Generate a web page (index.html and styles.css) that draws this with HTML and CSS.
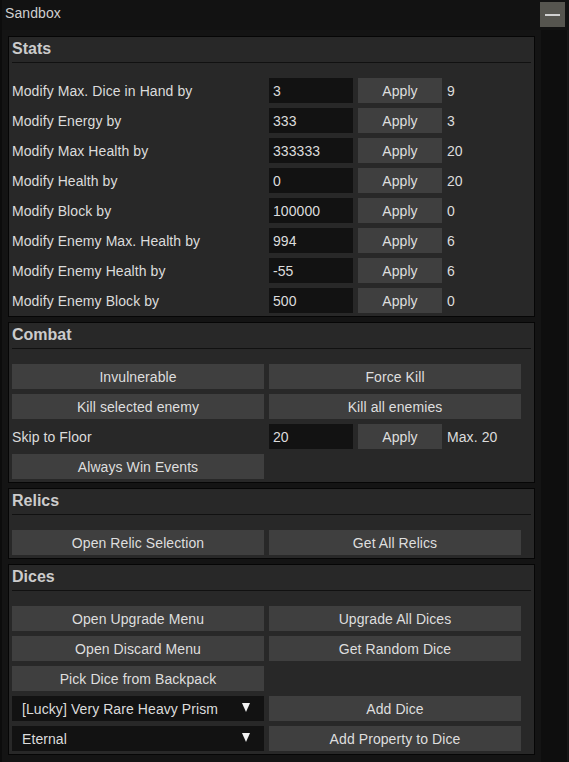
FILE: index.html
```html
<!DOCTYPE html>
<html lang="en">
<head>
    <title>Sandbox</title>
    <link rel="stylesheet" href="styles.css">
</head>
<body>
    <div class="window">
        <div class="titlebar">
            <span class="title">Sandbox</span>
            <button class="collapse"><span class="minus"></span></button>
        </div>

        <div class="content">
            <div class="panels">

                <div class="panel">
                    <div class="panel-header">Stats</div>
                    <div class="grid">
                        <div class="label">Modify Max. Dice in Hand by</div>
                        <div class="input">3</div>
                        <button class="btn">Apply</button>
                        <div class="value">9</div>

                        <div class="label">Modify Energy by</div>
                        <div class="input">333</div>
                        <button class="btn">Apply</button>
                        <div class="value">3</div>

                        <div class="label">Modify Max Health by</div>
                        <div class="input">333333</div>
                        <button class="btn">Apply</button>
                        <div class="value">20</div>

                        <div class="label">Modify Health by</div>
                        <div class="input">0</div>
                        <button class="btn">Apply</button>
                        <div class="value">20</div>

                        <div class="label">Modify Block by</div>
                        <div class="input">100000</div>
                        <button class="btn">Apply</button>
                        <div class="value">0</div>

                        <div class="label">Modify Enemy Max. Health by</div>
                        <div class="input">994</div>
                        <button class="btn">Apply</button>
                        <div class="value">6</div>

                        <div class="label">Modify Enemy Health by</div>
                        <div class="input">-55</div>
                        <button class="btn">Apply</button>
                        <div class="value">6</div>

                        <div class="label">Modify Enemy Block by</div>
                        <div class="input">500</div>
                        <button class="btn">Apply</button>
                        <div class="value">0</div>
                    </div>
                </div>

                <div class="panel">
                    <div class="panel-header">Combat</div>
                    <div class="grid">
                        <button class="btn">Invulnerable</button>
                        <button class="btn wide">Force Kill</button>

                        <button class="btn">Kill selected enemy</button>
                        <button class="btn wide">Kill all enemies</button>

                        <div class="label">Skip to Floor</div>
                        <div class="input">20</div>
                        <button class="btn">Apply</button>
                        <div class="value">Max. 20</div>

                        <button class="btn">Always Win Events</button>
                    </div>
                </div>

                <div class="panel">
                    <div class="panel-header">Relics</div>
                    <div class="grid">
                        <button class="btn">Open Relic Selection</button>
                        <button class="btn wide">Get All Relics</button>
                    </div>
                </div>

                <div class="panel">
                    <div class="panel-header">Dices</div>
                    <div class="grid">
                        <button class="btn">Open Upgrade Menu</button>
                        <button class="btn wide">Upgrade All Dices</button>

                        <button class="btn">Open Discard Menu</button>
                        <button class="btn wide">Get Random Dice</button>

                        <button class="btn">Pick Dice from Backpack</button>
                        <div class="spacer"></div>

                        <div class="dropdown">
                            <span>[Lucky] Very Rare Heavy Prism</span>
                            <span class="arrow"></span>
                        </div>
                        <button class="btn wide">Add Dice</button>

                        <div class="dropdown">
                            <span>Eternal</span>
                            <span class="arrow"></span>
                        </div>
                        <button class="btn wide">Add Property to Dice</button>
                    </div>
                </div>

            </div>
            <div class="scrollbar"></div>
        </div>
    </div>
</body>
</html>
```

FILE: styles.css
```css
body {
    margin: 0;
    background: #141414;
    font-family: "Liberation Sans", Arial, sans-serif;
    font-size: 14px;
    letter-spacing: 0.08px;
    color: #dcdcdc;
    overflow: hidden;
}

.window {
    width: 569px;
    height: 762px;
    box-sizing: border-box;
    border-left: 2px solid #0c0c0c;
    display: flex;
    flex-direction: column;
}

.titlebar {
    height: 30px;
    flex-shrink: 0;
    display: flex;
    align-items: flex-start;
    justify-content: space-between;
    background: #121212;
}

.title {
    margin-left: 3px;
    line-height: 27px;
    color: #cfcfcf;
}

.collapse {
    width: 25px;
    height: 25px;
    margin: 2px 4px 0 0;
    padding: 0;
    border: none;
    background: #56554f;
    display: flex;
    align-items: center;
    justify-content: center;
}

.minus {
    width: 15px;
    height: 2px;
    background: #d0d0d0;
}

.content {
    flex: 1;
    display: flex;
    min-height: 0;
}

.panels {
    width: 527px;
    margin: 6px 0 0 6px;
    display: flex;
    flex-direction: column;
    gap: 5px;
}

.panel {
    background: #282828;
    border: 1px solid #060606;
    padding: 0 3px 3px 3px;
}

.panel-header {
    height: 25px;
    line-height: 24px;
    border-bottom: 1px solid #111111;
    margin: 0 0 15px 0;
    font-size: 16px;
    font-weight: bold;
    letter-spacing: 0;
    color: #cccccc;
}

.grid {
    display: grid;
    grid-template-columns: 252px 84px 84px 74px;
    grid-auto-rows: 25px;
    gap: 5px;
}

.label {
    line-height: 27px;
    white-space: nowrap;
}

.input {
    background: #121212;
    padding-left: 4px;
    line-height: 26px;
}

.btn {
    border: none;
    padding: 1px 0 0 0;
    margin: 0;
    background: #3f3f3f;
    color: #dedede;
    font-family: inherit;
    font-size: 14px;
    letter-spacing: 0.08px;
    text-align: center;
}

.btn.wide {
    grid-column: 2 / 5;
}

.value {
    line-height: 26px;
    white-space: nowrap;
}

.spacer {
    grid-column: 2 / 5;
}

.dropdown {
    background: #121212;
    padding: 1px 14px 0 10px;
    display: flex;
    align-items: center;
    justify-content: space-between;
}

.arrow {
    width: 0;
    height: 0;
    border-left: 4.5px solid transparent;
    border-right: 4.5px solid transparent;
    border-top: 9px solid #f2f2f2;
    margin-top: -4px;
}

.scrollbar {
    width: 26px;
    margin-left: 6px;
    background: #0e0e0e;
    border-right: 1px solid #171717;
}
```
